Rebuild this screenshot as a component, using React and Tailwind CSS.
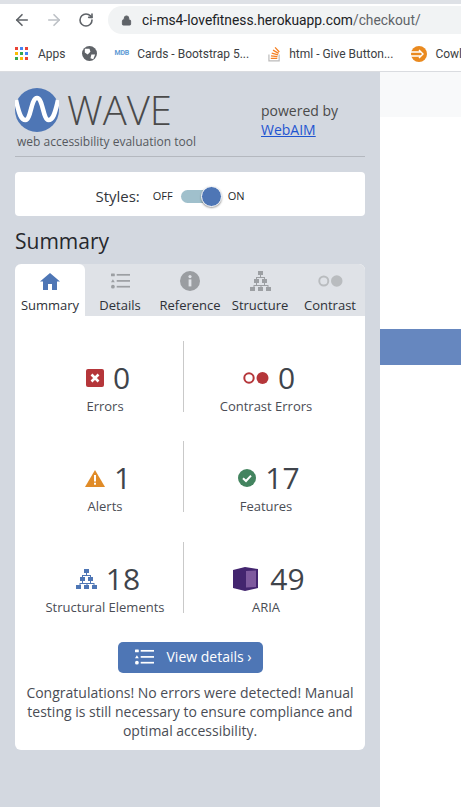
import React from "react";
import { ArrowLeft, ArrowRight, RotateCw, Lock } from "lucide-react";

const ListIcon = ({ className }) => (
    <svg viewBox="0 0 20 16" className={className} fill="currentColor">
        <rect x="0" y="0" width="4" height="3" rx="0.6" />
        <path d="M2 6.2 L4 9.4 H0 Z" />
        <circle cx="2" cy="14" r="2" />
        <rect x="6" y="0.6" width="14" height="1.8" />
        <rect x="6" y="7" width="14" height="1.8" />
        <rect x="6" y="13.1" width="14" height="1.8" />
    </svg>
);

const TreeIcon = ({ className }) => (
    <svg viewBox="0 0 21 20" className={className} fill="currentColor">
        <rect x="8" y="0" width="5" height="4" />
        <rect x="4" y="8" width="5" height="4" />
        <rect x="12" y="8" width="5" height="4" />
        <rect x="0" y="16" width="5" height="4" />
        <rect x="8" y="16" width="5" height="4" />
        <rect x="16" y="16" width="5" height="4" />
        <path d="M10 4h1v2h4v2h-1V7H7v1H6V6h4z" />
        <path d="M6 12h1v2h7v-2h1v2h3.5v2h-1v-1h-6v1h-1v-1h-6v1h-1v-2H6z" />
    </svg>
);

const HomeIcon = ({ className }) => (
    <svg viewBox="0 0 20 17" className={className} fill="currentColor">
        <path d="M10 0 L20 8.6 H17 V17 H12 V11 H8 V17 H3 V8.6 H0 Z" />
    </svg>
);

const ErrorIcon = () => (
    <svg viewBox="0 0 18 18" className="w-[18px] h-[18px]">
        <rect width="18" height="18" rx="2" fill="#b5363a" />
        <path d="M5.5 5.5 L12.5 12.5 M12.5 5.5 L5.5 12.5" stroke="#fff" strokeWidth="2.6" />
    </svg>
);

const ContrastIcon = ({ color, className }) => (
    <svg viewBox="0 0 26 12" className={className}>
        <circle cx="6" cy="6" r="4.7" fill="none" stroke={color} strokeWidth="2" />
        <circle cx="19.5" cy="6" r="6" fill={color} />
    </svg>
);

const AlertIcon = () => (
    <svg viewBox="0 0 20 17" className="w-5 h-[17px]">
        <path d="M10 0 L20 17 H0 Z" fill="#e08b27" />
        <rect x="9" y="5" width="2" height="6.5" fill="#fff" />
        <rect x="9" y="12.7" width="2" height="2" fill="#fff" />
    </svg>
);

const FeatureIcon = () => (
    <svg viewBox="0 0 18 18" className="w-[18px] h-[18px]">
        <circle cx="9" cy="9" r="9" fill="#43845f" />
        <path d="M5 9.2 L8 12 L13 6.6" fill="none" stroke="#fff" strokeWidth="2" />
    </svg>
);

const AriaIcon = () => (
    <svg viewBox="0 0 25 24" className="w-[25px] h-6">
        <path d="M0 3 L12 0 L25 2 V21 L12 24 L0 21 Z" fill="#43256f" />
        <path d="M13 4 L23 3.5 V20 L13 20.5 Z" fill="#7e5a9e" />
    </svg>
);

const Stat = ({ icon, value, label, gap, border }) => (
    <div className={`h-[71px] flex flex-col items-center ${border ? "border-r border-[#c9c9c9]" : ""}`}>
        <div className={`flex items-center h-[30px] mt-[22px] ml-[6px] ${gap}`}>
            {icon}
            <span className="text-[30px] leading-none text-[#3f444b]">{value}</span>
        </div>
        <div className="text-[13px] leading-[12px] text-[#4a4d55] mt-[7px]">{label}</div>
    </div>
);

const Tab = ({ label, icon, active }) => (
    <div className={`flex flex-col items-center justify-between h-[52px] pt-[6px] pb-[2px] ${active ? "bg-white rounded-t-[6px]" : ""}`}>
        <div className="h-[22px] flex items-center">{icon}</div>
        <div className="text-[13px] leading-[18px] text-[#2e3138]">{label}</div>
    </div>
);

const Bookmark = ({ icon, label, className }) => (
    <div className={`flex items-center shrink-0 ${className}`}>
        {icon}
        <span className="text-[12px] text-[#3c4043] whitespace-nowrap">{label}</span>
    </div>
);

const App = () => {
    return (
        <div className="w-[461px] h-[807px] overflow-hidden bg-white flex flex-col font-['Open_Sans',sans-serif]">
            {/* Browser toolbar */}
            <div className="h-[4px] bg-[#dee1e6] shrink-0"></div>
            <div className="h-[32px] flex items-center shrink-0 pl-[13px]">
                <ArrowLeft size={18} className="text-[#5f6368]" strokeWidth={2.2} />
                <ArrowRight size={18} className="text-[#bdc1c6] ml-[14px]" strokeWidth={2.2} />
                <RotateCw size={16} className="text-[#5f6368] ml-[15px]" strokeWidth={2.4} />
                <div className="ml-[14px] flex-1 h-[28px] bg-[#f1f3f4] rounded-l-full flex items-center pl-[13px]">
                    <Lock size={11} className="text-[#5f6368]" fill="#5f6368" />
                    <span className="ml-[10px] text-[13.8px] font-['Roboto',sans-serif] text-[#202124] whitespace-nowrap">
                        ci-ms4-lovefitness.herokuapp.com<span className="text-[#5f6368]">/checkout/</span>
                    </span>
                </div>
            </div>
            <div className="h-[36px] flex items-center shrink-0 overflow-hidden border-b border-[#dadce0] pl-[15px] font-['Roboto',sans-serif]">
                <Bookmark
                    label="Apps"
                    className="gap-[10px]"
                    icon={
                        <svg viewBox="0 0 13 13" className="w-[13px] h-[13px]">
                            {[["#ea4335", "#4285f4", "#ea4335"], ["#fbbc05", "#34a853", "#4285f4"], ["#34a853", "#fbbc05", "#ea4335"]].map((row, y) =>
                                row.map((c, x) => <rect key={`${x}-${y}`} x={x * 5} y={y * 5} width="3" height="3" fill={c} />)
                            )}
                        </svg>
                    }
                />
                <svg viewBox="0 0 16 16" className="w-[15px] h-[15px] ml-[16px] shrink-0">
                    <circle cx="8" cy="8" r="8" fill="#5f6368" />
                    <path d="M3 3 L8 3 L9 6 L6 9 L3 7 Z M10 9 L14 9 L12 14 L9 13 Z" fill="#fff" />
                </svg>
                <Bookmark
                    label="Cards - Bootstrap 5..."
                    className="gap-[8px] ml-[18px]"
                    icon={<span className="text-[7px] font-bold text-[#5f9bd5] tracking-tight">MDB</span>}
                />
                <Bookmark
                    label="html - Give Button..."
                    className="gap-[8px] ml-[19px]"
                    icon={
                        <svg viewBox="0 0 14 18" className="w-[13px] h-[17px]">
                            <path d="M1 10v7h11v-7" fill="none" stroke="#bcbbbb" strokeWidth="1.3" />
                            <path d="M3 14.2h7M3.2 11.6l7 .7M4 8.6l6.8 1.8M5.4 5.4l6 3.4M7.6 2.4l4.6 5" stroke="#f48024" strokeWidth="1.4" />
                        </svg>
                    }
                />
                <Bookmark
                    label="Cowl"
                    className="gap-[8px] ml-[18px]"
                    icon={
                        <svg viewBox="0 0 16 16" className="w-[16px] h-[16px]">
                            <circle cx="8" cy="8" r="8" fill="#ea8a1f" />
                            <path d="M0 6h10M0 10h10M8 4l4 4-4 4" stroke="#fff" strokeWidth="1.4" fill="none" />
                        </svg>
                    }
                />
            </div>

            <div className="flex flex-1 min-h-0">
                {/* WAVE sidebar */}
                <div className="w-[380px] shrink-0 bg-[#d3d8e0] px-[15px] pt-[15px]">
                    <div className="flex border-b border-[#b4b8bf] h-[70px]">
                        <div className="w-[246px] shrink-0">
                            <div className="flex items-center h-[45px]">
                                <svg viewBox="0 0 44 44" className="w-[44px] h-[44px]">
                                    <circle cx="22" cy="22" r="22" fill="#4e76b5" />
                                    <path d="M1 12 C4 26 6 32 10.5 32 C16 32 16 10 22 10 C28 10 28 32 33.5 32 C38 32 40 26 43 12" fill="none" stroke="#fff" strokeWidth="4.5" />
                                </svg>
                                <span className="ml-[8px] text-[40px] leading-none font-light text-[#4a4a4a]">WAVE</span>
                            </div>
                            <div className="ml-[2px] mt-[1px] text-[12px] leading-[17px] text-[#55585e]">web accessibility evaluation tool</div>
                        </div>
                        <div className="pt-[14px] text-[14px] leading-[19px] text-[#4a4a4a]">
                            <div>powered by</div>
                            <a href="#" className="underline text-[#1f55d0]">WebAIM</a>
                        </div>
                    </div>

                    <div className="mt-[15px] h-[44px] bg-white rounded-[4px] flex items-center justify-center pr-[40px] pt-[5px]">
                        <span className="text-[15px] text-[#33363c] mr-[13px]">Styles:</span>
                        <span className="text-[11px] text-[#26282d]">OFF</span>
                        <div className="relative w-[36px] h-[13px] bg-[#a0c0cc] rounded-full ml-[8px] mr-[11px]">
                            <div className="absolute right-[-5px] top-[-4px] w-[21px] h-[21px] rounded-full bg-[#4e76b5] border border-white shadow-[0_1px_2px_rgba(0,0,0,0.4)]"></div>
                        </div>
                        <span className="text-[11px] text-[#26282d]">ON</span>
                    </div>

                    <h2 className="mt-[11px] text-[21px] leading-[28px] font-normal text-[#26282d]">Summary</h2>

                    <div className="mt-[9px] rounded-[6px] overflow-hidden bg-white">
                        <div className="grid grid-cols-5 h-[52px] bg-[#dfe2e7]">
                            <Tab label="Summary" active icon={<HomeIcon className="w-5 h-[17px] text-[#4e76b5]" />} />
                            <Tab label="Details" icon={<ListIcon className="w-[19px] h-[16px] text-[#9c9fa3]" />} />
                            <Tab
                                label="Reference"
                                icon={
                                    <svg viewBox="0 0 20 20" className="w-5 h-5">
                                        <circle cx="10" cy="10" r="10" fill="#9a9da1" />
                                        <circle cx="10" cy="5.6" r="1.6" fill="#dfe2e7" />
                                        <rect x="8.6" y="8.4" width="2.8" height="7" fill="#dfe2e7" />
                                    </svg>
                                }
                            />
                            <Tab label="Structure" icon={<TreeIcon className="w-[21px] h-5 text-[#9c9fa3]" />} />
                            <Tab label="Contrast" icon={<ContrastIcon color="#b9bcbf" className="w-[25px] h-[12px]" />} />
                        </div>

                        <div className="pt-[25px] pb-[10px]">
                            <div className="grid grid-cols-[157px_164px] gap-y-[29.4px] pl-[12px]">
                                <Stat border icon={<ErrorIcon />} value="0" label="Errors" gap="gap-[9px]" />
                                <Stat icon={<ContrastIcon color="#b5363a" className="w-[26px] h-[12px]" />} value="0" label="Contrast Errors" gap="gap-[9px]" />
                                <Stat border icon={<AlertIcon />} value="1" label="Alerts" gap="gap-[9px]" />
                                <Stat icon={<FeatureIcon />} value="17" label="Features" gap="gap-[9px]" />
                                <Stat border icon={<TreeIcon className="w-[21px] h-5 text-[#4e76b5]" />} value="18" label="Structural Elements" gap="gap-[9px]" />
                                <Stat icon={<AriaIcon />} value="49" label="ARIA" gap="gap-[12px]" />
                            </div>

                            <div className="mt-[29px] flex justify-center">
                                <div className="w-[145px] h-[31px] rounded-[5px] bg-[#4e76b5] flex items-center text-white pl-[17px]">
                                    <ListIcon className="w-[19px] h-[16px] text-white" />
                                    <span className="ml-[13px] text-[14px] whitespace-nowrap -mt-[1px]">View details ›</span>
                                </div>
                            </div>

                            <p className="mt-[10px] px-[10px] text-center text-[14px] leading-[19px] text-[#4a4d55]">
                                Congratulations! No errors were detected! Manual testing is still necessary to ensure compliance and optimal accessibility.
                            </p>
                        </div>
                    </div>
                </div>

                {/* Page behind the sidebar */}
                <div className="flex-1 flex flex-col">
                    <div className="h-[45px] bg-[#f8f9fa]"></div>
                    <div className="h-[212px]"></div>
                    <div className="h-[36px] bg-[#6687bf]"></div>
                </div>
            </div>
        </div>
    );
};

export default App;
